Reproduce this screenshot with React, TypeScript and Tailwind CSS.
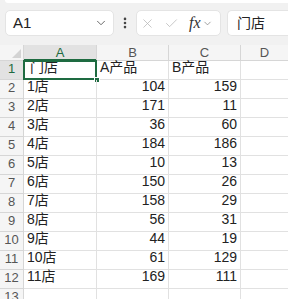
import { ChevronDown, EllipsisVertical, X, Check } from 'lucide-react';

const rows: [string, string, string][] = [
  ['门店', 'A产品', 'B产品'],
  ['1店', '104', '159'],
  ['2店', '171', '11'],
  ['3店', '36', '60'],
  ['4店', '184', '186'],
  ['5店', '10', '13'],
  ['6店', '150', '26'],
  ['7店', '158', '29'],
  ['8店', '56', '31'],
  ['9店', '44', '19'],
  ['10店', '61', '129'],
  ['11店', '169', '111'],
  ['', '', ''],
];

const font = { fontFamily: '"Liberation Sans", "Noto Sans CJK SC", sans-serif' };

export default function App() {
  return (
    <div className="w-[288px] h-[299px] overflow-hidden bg-white text-[#222]" style={font}>
      {/* Formula bar area */}
      <div className="h-[45px] bg-[#f1f1f1]">
        <div className="ml-[5px] h-[3px] bg-white rounded-bl-[6px]" />
        <div className="mt-[7px] flex items-center">
          <div className="ml-[5px] w-[109px] h-[26px] bg-white rounded-[5px] border border-[#e4e4e4] flex items-center pl-[7px] pr-[5px]">
            <span className="text-[15px] text-[#222] flex-1">A1</span>
            <ChevronDown size={14} strokeWidth={1.5} className="text-[#555]" />
          </div>
          <div className="w-[22px] flex justify-center">
            <EllipsisVertical size={14} strokeWidth={2.5} className="text-[#444]" />
          </div>
          <div className="w-[85px] h-[26px] bg-white rounded-[5px] border border-[#e4e4e4] flex items-center pl-[3px]">
            <X size={15} strokeWidth={1.2} className="text-[#b5b5b5]" />
            <Check size={15} strokeWidth={1.2} className="ml-[9px] text-[#b5b5b5]" />
            <span
              className="ml-[10px] text-[16px] italic text-[#333] leading-none"
              style={{ fontFamily: '"Liberation Serif", serif' }}
            >
              fx
            </span>
            <ChevronDown size={11} strokeWidth={1.5} className="ml-[1px] text-[#777]" />
          </div>
          <div className="ml-[6px] flex-1 h-[26px] bg-white rounded-l-[5px] border border-r-0 border-[#e4e4e4] flex items-center pl-[9px]">
            <span className="text-[14px]">门店</span>
          </div>
        </div>
      </div>

      {/* Header row */}
      <div className="flex h-[16px] text-[13px] text-[#555] bg-[#f5f5f5] border-b border-[#d6d6d6]">
        <div className="w-[24px] border-r border-[#d6d6d6] relative">
          <div className="absolute right-[2px] bottom-[2px] w-0 h-0 border-l-[9px] border-l-transparent border-b-[9px] border-b-[#d3d3d3]" />
        </div>
        <div className="w-[73px] border-r border-[#d6d6d6] bg-[#e2e2e2] text-[#1e6b41] flex items-center justify-center relative">
          A
          <div className="absolute left-0 right-0 bottom-[-1px] h-[2px] bg-[#1e6b41]" />
        </div>
        <div className="w-[72px] border-r border-[#d6d6d6] flex items-center justify-center">B</div>
        <div className="w-[72px] border-r border-[#d6d6d6] flex items-center justify-center">C</div>
        <div className="flex-1 flex items-center justify-center">D</div>
      </div>

      {rows.map((r, i) => (
        <div key={i} className="flex h-[19px] text-[14px]">
          <div
            className={`w-[24px] border-r border-b border-[#d6d6d6] text-[13px] flex items-end justify-center pb-[1px] ${
              i === 0 ? 'bg-[#e2e2e2] text-[#1e6b41]' : 'bg-[#f5f5f5] text-[#555]'
            }`}
          >
            {i + 1}
          </div>
          <div
            className={`w-[73px] border-r border-b border-[#e1e1e1] flex items-end pb-[1px] relative ${
              i === 0 ? 'pl-[6px]' : 'pl-[3px]'
            }`}
          >
            {r[0]}
            {i === 0 && (
              <>
                <div className="absolute left-[-1px] top-[-1px] w-[74px] h-[20px] border-2 border-[#1e6b41]" />
                <div className="absolute right-[-4px] bottom-[-4px] w-[6px] h-[6px] bg-[#1e6b41] border border-white" />
              </>
            )}
          </div>
          <div
            className={`w-[72px] border-r border-b border-[#e1e1e1] flex items-end pb-[1px] ${
              i === 0 ? 'justify-start pl-[3px]' : 'justify-end pr-[3px]'
            }`}
          >
            {r[1]}
          </div>
          <div
            className={`w-[72px] border-r border-b border-[#e1e1e1] flex items-end pb-[1px] ${
              i === 0 ? 'justify-start pl-[3px]' : 'justify-end pr-[3px]'
            }`}
          >
            {r[2]}
          </div>
          <div className="flex-1 border-b border-[#e1e1e1]" />
        </div>
      ))}
    </div>
  );
}
